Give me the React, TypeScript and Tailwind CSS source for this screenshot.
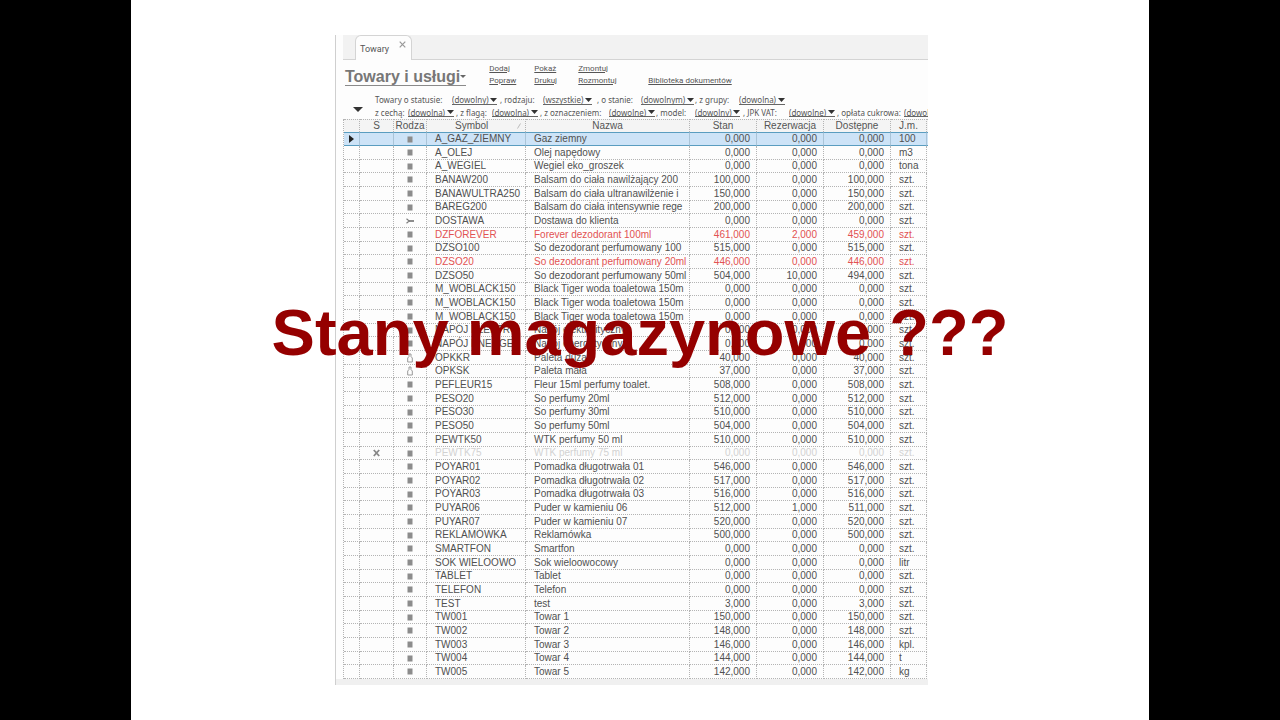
import React from "react";

type Kind = "goods" | "service" | "package";
type Tone = "normal" | "alert" | "muted";

interface Item {
  symbol: string;
  name: string;
  stock: string;
  reserved: string;
  available: string;
  unit: string;
  kind: Kind;
  tone: Tone;
}

const item = (
  symbol: string,
  name: string,
  stock: string,
  unit = "szt.",
  reserved = "0,000",
  available = stock,
  kind: Kind = "goods",
  tone: Tone = "normal",
): Item => ({ symbol, name, stock, reserved, available, unit, kind, tone });

const items: Item[] = [
  item("A_GAZ_ZIEMNY", "Gaz ziemny", "0,000", "100"),
  item("A_OLEJ", "Olej napędowy", "0,000", "m3"),
  item("A_WEGIEL", "Wegiel eko_groszek", "0,000", "tona"),
  item("BANAW200", "Balsam do ciała nawilżający 200", "100,000"),
  item("BANAWULTRA250", "Balsam do ciała ultranawilżenie i", "150,000"),
  item("BAREG200", "Balsam do ciała intensywnie rege", "200,000"),
  item("DOSTAWA", "Dostawa do klienta", "0,000", "szt.", "0,000", "0,000", "service"),
  item("DZFOREVER", "Forever dezodorant 100ml", "461,000", "szt.", "2,000", "459,000", "goods", "alert"),
  item("DZSO100", "So dezodorant perfumowany 100", "515,000"),
  item("DZSO20", "So dezodorant perfumowany 20ml", "446,000", "szt.", "0,000", "446,000", "goods", "alert"),
  item("DZSO50", "So dezodorant perfumowany 50ml", "504,000", "szt.", "10,000", "494,000"),
  item("M_WOBLACK150", "Black Tiger woda toaletowa 150m", "0,000"),
  item("M_WOBLACK150", "Black Tiger woda toaletowa 150m", "0,000"),
  item("M_WOBLACK150", "Black Tiger woda toaletowa 150m", "0,000"),
  item("NAPÓJ ELEKTRO", "Napój elektrolityczny", "0,000"),
  item("NAPÓJ ENERGE", "Napój energetyczny", "0,000"),
  item("OPKKR", "Paleta duża", "40,000", "szt.", "0,000", "40,000", "package"),
  item("OPKSK", "Paleta mała", "37,000", "szt.", "0,000", "37,000", "package"),
  item("PEFLEUR15", "Fleur 15ml perfumy toalet.", "508,000"),
  item("PESO20", "So perfumy 20ml", "512,000"),
  item("PESO30", "So perfumy 30ml", "510,000"),
  item("PESO50", "So perfumy 50ml", "504,000"),
  item("PEWTK50", "WTK perfumy 50 ml", "510,000"),
  item("PEWTK75", "WTK perfumy 75 ml", "0,000", "szt.", "0,000", "0,000", "goods", "muted"),
  item("POYAR01", "Pomadka długotrwała 01", "546,000"),
  item("POYAR02", "Pomadka długotrwała 02", "517,000"),
  item("POYAR03", "Pomadka długotrwała 03", "516,000"),
  item("PUYAR06", "Puder w kamieniu 06", "512,000", "szt.", "1,000", "511,000"),
  item("PUYAR07", "Puder w kamieniu 07", "520,000"),
  item("REKLAMÓWKA", "Reklamówka", "500,000"),
  item("SMARTFON", "Smartfon", "0,000"),
  item("SOK WIELOOWO", "Sok wieloowocowy", "0,000", "litr"),
  item("TABLET", "Tablet", "0,000"),
  item("TELEFON", "Telefon", "0,000"),
  item("TEST", "test", "3,000"),
  item("TW001", "Towar 1", "150,000"),
  item("TW002", "Towar 2", "148,000"),
  item("TW003", "Towar 3", "146,000", "kpl."),
  item("TW004", "Towar 4", "144,000", "t"),
  item("TW005", "Towar 5", "142,000", "kg"),
];

const toneClass: Record<Tone, string> = {
  normal: "text-[#505050]",
  alert: "text-[#e25252]",
  muted: "text-[#d2d2d2]",
};

function KindIcon({ kind }: { kind: Kind }) {
  if (kind === "service") {
    return (
      <svg viewBox="0 0 10 8" className="mx-auto block h-2 w-2.5" fill="none" stroke="#808080">
        <path d="M1.5 1.8 L4.2 4 L1.5 6.2" strokeWidth="1.2" />
        <path d="M3.8 4 H9" strokeWidth="1.8" />
      </svg>
    );
  }
  if (kind === "package") {
    return (
      <svg viewBox="0 0 8 10" className="mx-auto block h-2.5 w-2" fill="none" stroke="#999" strokeWidth="1">
        <path d="M3 1 H5 V3.5 L6.3 5 V9 H1.7 V5 L3 3.5 Z" />
      </svg>
    );
  }
  return (
    <svg viewBox="0 0 6 7" className="mx-auto block h-[7px] w-1.5">
      <rect x="0.5" y="0.5" width="5" height="6" fill="#8c8c8c" />
    </svg>
  );
}

function Filter({ label, value }: { label: string; value: string }) {
  return (
    <>
      <span className="whitespace-nowrap">{label}</span>
      <span className="flex h-[9px] items-center gap-px justify-self-start border-b border-[#666]">
        <select aria-label={label} className="h-[9px] appearance-none bg-transparent p-0 leading-[9px] outline-none">
          <option>{value}</option>
        </select>
        <svg viewBox="0 0 7 4" className="h-1 w-[7px]">
          <path d="M0 0 H7 L3.5 4 Z" fill="#333" />
        </svg>
      </span>
    </>
  );
}

const actions = [
  ["Dodaj", "Pokaż", "Zmontuj", ""],
  ["Popraw", "Drukuj", "Rozmontuj", "Biblioteka dokumentów"],
];

const cell = "border-r border-b border-dotted border-[#b4b4b4] p-0 whitespace-nowrap overflow-hidden";
const headCell = "h-[13px] border-r border-t border-dotted border-[#b4b4b4] p-0 text-center font-normal whitespace-nowrap";

export default function App() {
  return (
    <div className="min-h-screen bg-black font-['Liberation_Sans',Arial,sans-serif]">
      <main className="relative mx-auto min-h-screen w-full max-w-[1018px] bg-white pt-[35px] pl-[204px]">
        <section className="w-full max-w-[593px] overflow-hidden border-l border-[#cfcfcf] bg-[#fdfdfd]">
          <nav className="ml-[7px] flex h-[25px] items-end border-b border-[#d4d4d4] bg-[#f2f2f2] pl-3">
            <div className="-mb-px flex h-[25px] items-start rounded-t-md border border-b-0 border-[#d4d4d4] bg-[#fdfdfd] pl-1 font-['Roboto',sans-serif] text-[9px] text-[#555]">
              <a href="#towary" className="pt-[7px] leading-3">Towary</a>
              <button type="button" aria-label="Zamknij" className="mt-[5px] mr-[5px] ml-2.5">
                <svg viewBox="0 0 7 7" className="block h-[7px] w-[7px]" stroke="#999" strokeWidth="1.2">
                  <path d="M0.7 0.7 L6.3 6.3 M6.3 0.7 L0.7 6.3" />
                </svg>
              </button>
            </div>
          </nav>

          <header className="flex h-[34px] items-start pl-[9px]">
            <button
              type="button"
              className="mt-2 flex h-[18px] items-center border-b border-[#8a8a8a] text-base font-bold whitespace-nowrap text-[#777]"
            >
              Towary i usługi
              <svg viewBox="0 0 6 3" className="h-[3px] w-1.5">
                <path d="M0 0 H6 L3 3 Z" fill="#666" />
              </svg>
            </button>
            <div className="mt-[3px] ml-[23px] font-['Roboto',sans-serif] text-[8px] leading-3 text-[#555]">
              {actions.map((row, i) => (
                <div key={i} className="grid grid-cols-[45px_44px_70px_auto]">
                  {row.map((text) => (
                    <span key={text}>
                      {text && (
                        <a href="#akcja" className="whitespace-nowrap underline">
                          {text}
                        </a>
                      )}
                    </span>
                  ))}
                </div>
              ))}
            </div>
          </header>

          <div className="flex h-[25px] items-end pl-[17px] font-['Noto_Sans',sans-serif] text-[8px] leading-3 text-[#555]">
            <button type="button" aria-label="Filtry" className="mr-3 mb-[7px]">
              <svg viewBox="0 0 10 5" className="block h-[5px] w-2.5">
                <path d="M0 0 H10 L5 5 Z" fill="#333" />
              </svg>
            </button>
            <div className="min-w-0 flex-1">
              <div className="grid h-3 grid-cols-[77px_48px_43px_54px_44px_54px_44px_auto] items-center">
                <Filter label="Towary o statusie:" value="(dowolny)" />
                <Filter label=", rodzaju:" value="(wszystkie)" />
                <Filter label=", o stanie:" value="(dowolnym)" />
                <Filter label=", z grupy:" value="(dowolna)" />
              </div>
              <div className="grid h-[13px] grid-cols-[33px_48px_36px_48px_69px_47px_39px_48px_46px_48px_67px_auto] items-center">
                <Filter label="z cechą:" value="(dowolna)" />
                <Filter label=", z flagą:" value="(dowolna)" />
                <Filter label=", z oznaczeniem:" value="(dowolne)" />
                <Filter label=", model:" value="(dowolny)" />
                <Filter label=", JPK VAT:" value="(dowolne)" />
                <Filter label=", opłata cukrowa:" value="(dowolna)" />
              </div>
            </div>
          </div>

          <div className="pl-[7px]">
            <table className="w-full table-fixed border-separate border-spacing-0 border-l border-dotted border-[#b4b4b4] text-[10px] leading-3">
              <colgroup>
                <col className="w-4" />
                <col className="w-[34px]" />
                <col className="w-[33px]" />
                <col className="w-[99px]" />
                <col />
                <col className="w-[67px]" />
                <col className="w-[67px]" />
                <col className="w-[67px]" />
                <col className="w-9" />
                <col className="w-px" />
              </colgroup>
              <thead className="bg-[#f4f4f4] text-[#555]">
                <tr>
                  <th className={headCell} />
                  <th className={headCell}>S</th>
                  <th className={headCell}>Rodza</th>
                  <th className={headCell}>
                    <span className="flex items-center justify-between pr-1 pl-7">
                      Symbol
                      <svg viewBox="0 0 4 6" className="h-1.5 w-1" stroke="#bbb">
                        <path d="M0.5 5.5 L3.5 0.5" />
                      </svg>
                    </span>
                  </th>
                  <th className={headCell}>Nazwa</th>
                  <th className={headCell}>Stan</th>
                  <th className={headCell}>Rezerwacja</th>
                  <th className={headCell}>Dostępne</th>
                  <th className={headCell}>J.m.</th>
                  <th className="border-t border-dotted border-[#b4b4b4] p-0" />
                </tr>
              </thead>
              <tbody>
                {items.map((it, i) => {
                  const selected = i === 0;
                  const c = selected
                    ? "border-y border-r border-y-[#5a9dc0] border-r-[#a9c4d8] p-0 whitespace-nowrap"
                    : cell;
                  return (
                    <tr
                      key={i}
                      className={`h-[14px] nth-[3n]:h-[13px] ${toneClass[it.tone]} ${selected ? "bg-[#cde3f7]" : ""}`}
                    >
                      <td className={c}>
                        {selected && (
                          <svg viewBox="0 0 5 8" className="mx-auto block h-2 w-[5px]">
                            <path d="M0 0 L5 4 L0 8 Z" fill="#222" />
                          </svg>
                        )}
                      </td>
                      <td className={c}>
                        {it.tone === "muted" && (
                          <svg viewBox="0 0 7 8" className="mx-auto block h-2 w-[7px]" stroke="#888" strokeWidth="1.8">
                            <path d="M0.8 1 L6.2 7 M6.2 1 L0.8 7" />
                          </svg>
                        )}
                      </td>
                      <td className={c}>
                        <KindIcon kind={it.kind} />
                      </td>
                      <td className={`${c} pl-2`}>{it.symbol}</td>
                      <td className={`${c} pl-2`}>{it.name}</td>
                      <td className={`${c} pr-1.5 text-right`}>{it.stock}</td>
                      <td className={`${c} pr-1.5 text-right`}>{it.reserved}</td>
                      <td className={`${c} pr-1.5 text-right`}>{it.available}</td>
                      <td className={`${c} pl-2`}>{it.unit}</td>
                      <td className={selected ? "border-y border-[#5a9dc0] p-0" : "p-0"} />
                    </tr>
                  );
                })}
              </tbody>
            </table>
          </div>
          <footer className="h-1.5 bg-[#f0f0f0]" />
        </section>

        <h1 className="pointer-events-none absolute inset-x-0 top-[296px] text-center text-[65px] leading-[74px] font-bold whitespace-nowrap text-[#950000]">
          Stany magazynowe ???
        </h1>
      </main>
    </div>
  );
}
